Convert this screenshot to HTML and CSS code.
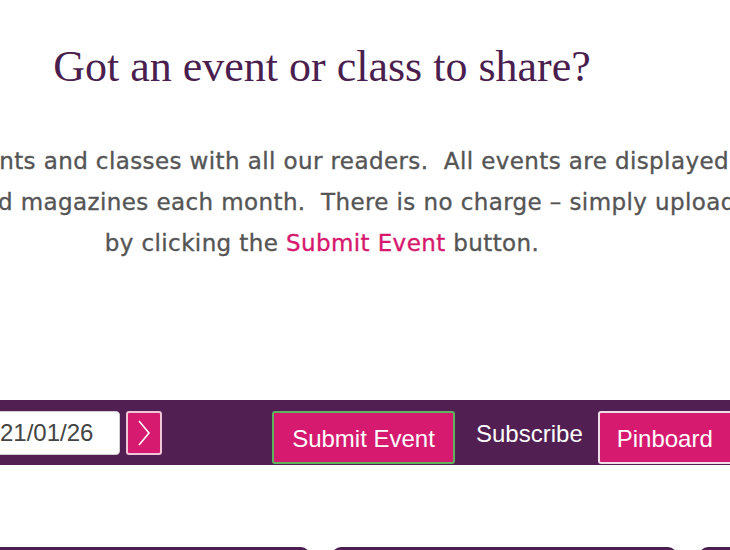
FILE: index.html
```html
<!DOCTYPE html>
<html>
<head>
<meta charset="utf-8">
<link rel="stylesheet" href="styles.css">
</head>
<body>
<div class="page">
  <section class="intro">
    <h1 class="title">Got an event or class to share?</h1>
    <p class="lead">
      <span class="line">We share events and classes with all our readers.&nbsp; All events are displayed in our</span>
      <span class="line">websites and magazines each month.&nbsp; There is no charge – simply upload one</span>
      <span class="line">by clicking the <span class="hl">Submit Event</span> button.</span>
    </p>
  </section>
  <div class="toolbar">
    <div class="date-group">
      <div class="date-input">21/01/26</div>
      <button class="arrow-btn" aria-label="Next">
        <svg width="14" height="28" viewBox="0 0 14 28"><path d="M2 2 L12 14 L2 26" fill="none" stroke="#fff" stroke-width="1.6"/></svg>
      </button>
    </div>
    <button class="btn btn-submit">Submit Event</button>
    <span class="subscribe">Subscribe</span>
    <button class="btn btn-pin">Pinboard</button>
  </div>
  <div class="cards">
    <div class="card"></div>
    <div class="card"></div>
    <div class="card"></div>
  </div>
</div>
</body>
</html>
```
FILE: styles.css
```css
html, body { margin: 0; padding: 0; background: #fff; }
body { overflow: hidden; width: 730px; height: 550px; }
.page { width: 1100px; margin-left: -228px; }
.intro { text-align: center; padding-top: 42px; }
.title {
  margin: 0;
  font-family: "Liberation Serif", "DejaVu Serif", serif;
  font-weight: 400;
  font-size: 44px;
  line-height: 50px;
  color: #4a1e4e;
}
.lead {
  margin: 49px 0 0;
  font-family: "DejaVu Sans", "Noto Sans", sans-serif;
  font-weight: 400;
  font-size: 23px;
  letter-spacing: 0.4px;
  line-height: 41px;
  color: #555;
  -webkit-text-stroke: 0.35px #555;
}
.line { display: block; white-space: nowrap; }
.hl { color: #d6186e; -webkit-text-stroke: 0.35px #d6186e; }
.toolbar {
  margin-top: 136px;
  height: 65px;
  background: #511f52;
  display: flex;
  align-items: flex-start;
  padding: 11px 0 0 168px;
  box-sizing: border-box;
  font-family: "Liberation Sans", Arial, sans-serif;
}
.date-group { display: flex; gap: 6px; }
.date-input {
  width: 180px; height: 44px; box-sizing: border-box;
  background: #fff; border: 1px solid #cfcfcf; border-radius: 4px;
  padding: 0 0 0 59px;
  font-size: 24px; line-height: 42px; color: #444;
}
.arrow-btn {
  width: 36px; height: 44px; box-sizing: border-box;
  background: #d51a6f; border: 2px solid #efc6d6; border-radius: 3px;
  padding: 0; display: flex; align-items: center; justify-content: center;
}
.btn {
  height: 53px; box-sizing: border-box;
  background: #d51a6f; color: #fff; border-radius: 3px;
  font-family: "Liberation Sans", Arial, sans-serif; font-size: 24px;
  padding: 3px 0 0; cursor: pointer;
}
.btn-submit { margin-left: 110px; width: 183px; border: 2px solid #5fb35f; }
.subscribe { margin-left: 21px; color: #fff; font-size: 24px; line-height: 46px; }
.btn-pin { margin-left: 15px; width: 150px; border: 2px solid #ecdfe6; text-align: left; padding-left: 17px; }
.cards { display: flex; gap: 22px; margin: 82px 0 0 193px; }
.card { width: 345px; height: 40px; background: #4b2050; border-radius: 9px; flex: none; }
```
